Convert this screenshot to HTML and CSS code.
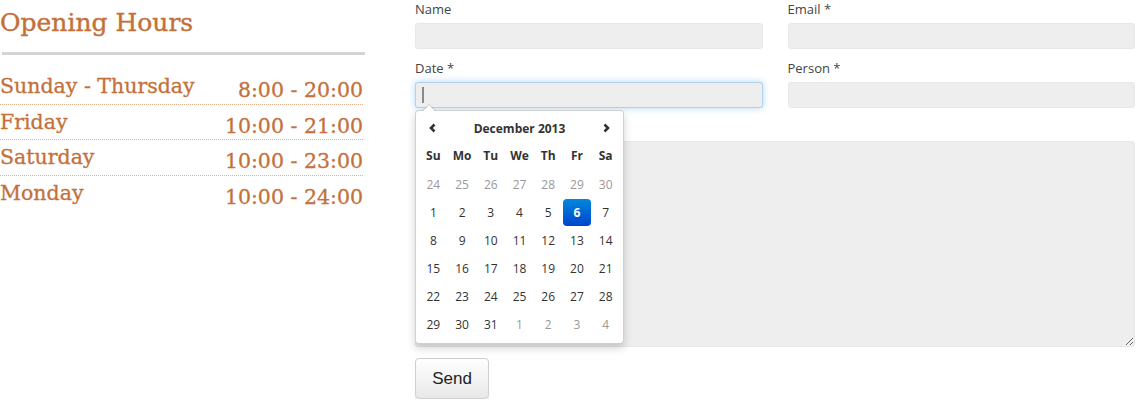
FILE: index.html
```html
<!DOCTYPE html>
<html>
<head>
<meta charset="utf-8">
<link rel="stylesheet" href="styles.css">
</head>
<body>
<div class="page">
  <section class="hours">
    <h2 class="hours-title">Opening Hours</h2>
    <div class="rule"></div>
    <ul class="hours-list">
      <li class="hours-row"><span class="day">Sunday - Thursday</span><span class="time">8:00 - 20:00</span></li>
      <li class="hours-row"><span class="day">Friday</span><span class="time">10:00 - 21:00</span></li>
      <li class="hours-row"><span class="day">Saturday</span><span class="time">10:00 - 23:00</span></li>
      <li class="hours-row"><span class="day">Monday</span><span class="time">10:00 - 24:00</span></li>
    </ul>
  </section>
  <form class="booking">
    <div class="field">
      <label class="label">Name</label>
      <input class="input" type="text">
    </div>
    <div class="field">
      <label class="label">Email *</label>
      <input class="input" type="text">
    </div>
    <div class="field date-field">
      <label class="label">Date *</label>
      <div class="input-wrap">
        <input class="input focused" type="text">
        <span class="caret"></span>
      </div>
      <div class="datepicker">
        <div class="dp-head">
          <span class="dp-nav"><svg width="10" height="10" viewBox="0 0 10 10"><polyline points="6.5,1.5 3,5 6.5,8.5" fill="none" stroke="#333" stroke-width="2.6"/></svg></span>
          <span class="dp-month">December 2013</span>
          <span class="dp-nav"><svg width="10" height="10" viewBox="0 0 10 10"><polyline points="3.5,1.5 7,5 3.5,8.5" fill="none" stroke="#333" stroke-width="2.6"/></svg></span>
        </div>
        <div class="dp-grid">
          <span class="dow">Su</span><span class="dow">Mo</span><span class="dow">Tu</span><span class="dow">We</span><span class="dow">Th</span><span class="dow">Fr</span><span class="dow">Sa</span>
          <span class="d old">24</span><span class="d old">25</span><span class="d old">26</span><span class="d old">27</span><span class="d old">28</span><span class="d old">29</span><span class="d old">30</span>
          <span class="d">1</span><span class="d">2</span><span class="d">3</span><span class="d">4</span><span class="d">5</span><span class="d active">6</span><span class="d">7</span>
          <span class="d">8</span><span class="d">9</span><span class="d">10</span><span class="d">11</span><span class="d">12</span><span class="d">13</span><span class="d">14</span>
          <span class="d">15</span><span class="d">16</span><span class="d">17</span><span class="d">18</span><span class="d">19</span><span class="d">20</span><span class="d">21</span>
          <span class="d">22</span><span class="d">23</span><span class="d">24</span><span class="d">25</span><span class="d">26</span><span class="d">27</span><span class="d">28</span>
          <span class="d">29</span><span class="d">30</span><span class="d">31</span><span class="d old">1</span><span class="d old">2</span><span class="d old">3</span><span class="d old">4</span>
        </div>
      </div>
    </div>
    <div class="field">
      <label class="label">Person *</label>
      <input class="input" type="text">
    </div>
    <div class="field wide">
      <label class="label">Message</label>
      <textarea class="textarea"></textarea>
    </div>
    <div class="field wide">
      <button class="send" type="button">Send</button>
    </div>
  </form>
</div>
</body>
</html>
```

FILE: styles.css
```css
html, body {
  margin: 0;
  padding: 0;
  background: #fff;
}
.page {
  display: flex;
  gap: 50px;
  width: 1140px;
  padding-right: 5px;
  box-sizing: border-box;
}
.hours {
  width: 365px;
  flex: none;
  color: #c4703a;
  font-family: "DejaVu Serif", serif;
}
.hours-title {
  margin: 8px 0 0 0;
  font-size: 25px;
  line-height: 30px;
  font-weight: normal;
  color: #c4703a;
  -webkit-text-stroke: 0.4px #c4703a;
}
.rule {
  margin: 14px 0 0 2px;
  height: 3px;
  background: #d4d4d4;
}
.hours-list {
  list-style: none;
  margin: 14px 0 0 0;
  padding: 0;
  width: 363px;
}
.hours-row {
  display: flex;
  justify-content: space-between;
  align-items: flex-start;
  height: 35.5px;
  box-sizing: border-box;
  padding-top: 5px;
  font-size: 20.5px;
  line-height: 24px;
  border-bottom: 1px dotted #e8b08c;
  -webkit-text-stroke: 0.3px #c4703a;
}
.hours-row:last-child {
  border-bottom: none;
}
.time {
  padding-top: 4px;
}
.booking {
  flex: 1;
  display: grid;
  grid-template-columns: 1fr 1fr;
  column-gap: 25px;
  row-gap: 10px;
  align-content: start;
  font-family: "Open Sans", sans-serif;
}
.field {
  display: flex;
  flex-direction: column;
}
.field.wide {
  grid-column: 1 / 3;
}
.label {
  font-size: 13px;
  line-height: 18px;
  color: #444;
  margin-bottom: 5px;
}
.input {
  height: 26px;
  box-sizing: border-box;
  width: 100%;
  margin: 0;
  background: #eeeeee;
  border: 1px solid #e8e8e8;
  border-radius: 3px;
  outline: none;
  padding: 0 6px;
}
.input.focused {
  border-color: rgba(120, 180, 236, 0.5);
  box-shadow: 0 0 7px rgba(82, 168, 236, 0.45);
}
.input-wrap {
  position: relative;
}
.caret {
  position: absolute;
  left: 7px;
  top: 5px;
  width: 2px;
  height: 16px;
  background: #8a8a8a;
}
.date-field {
  position: relative;
  z-index: 2;
}
.datepicker {
  position: absolute;
  left: 0;
  top: 51px;
  width: 209px;
  box-sizing: border-box;
  padding: 3px 3px 5px;
  background: #fff;
  border: 1px solid rgba(0, 0, 0, 0.18);
  border-radius: 4px;
  box-shadow: 0 4px 8px rgba(0, 0, 0, 0.18);
  color: #333;
}
.datepicker::before {
  content: "";
  position: absolute;
  left: 6px;
  top: -7px;
  border-left: 7px solid transparent;
  border-right: 7px solid transparent;
  border-bottom: 7px solid rgba(0, 0, 0, 0.18);
}
.datepicker::after {
  content: "";
  position: absolute;
  left: 7px;
  top: -6px;
  border-left: 6px solid transparent;
  border-right: 6px solid transparent;
  border-bottom: 6px solid #fff;
}
.dp-head {
  display: grid;
  grid-template-columns: 1fr 5fr 1fr;
  height: 28px;
  align-items: center;
  text-align: center;
  font-size: 12px;
  font-weight: bold;
}
.dp-nav {
  display: flex;
  justify-content: center;
  align-items: center;
}
.dp-grid {
  display: grid;
  grid-template-columns: repeat(7, 1fr);
  grid-auto-rows: 28px;
  font-size: 12px;
  text-align: center;
}
.dow {
  font-weight: bold;
  line-height: 28px;
}
.d {
  line-height: 27px;
  height: 27px;
  border-radius: 4px;
  margin-top: 1px;
}
.d.old {
  color: #999;
}
.d.active {
  background: linear-gradient(#0088dd, #0044cc);
  color: #fff;
  font-weight: bold;
  margin-left: 0.5px;
  margin-right: 0.5px;
}
.textarea {
  height: 206px;
  box-sizing: border-box;
  width: 100%;
  margin: 0;
  background: #eeeeee;
  border: 1px solid #e8e8e8;
  border-radius: 3px;
  resize: vertical;
  outline: none;
}
.send {
  margin-top: 1px;
  width: 74px;
  height: 41px;
  font-family: "Liberation Sans", Arial, sans-serif;
  font-size: 17px;
  color: #222;
  background: linear-gradient(#ffffff, #e8e8e8);
  border: 1px solid #cfcfcf;
  border-radius: 4px;
  box-shadow: 0 1px 1px rgba(0, 0, 0, 0.08);
}
```
